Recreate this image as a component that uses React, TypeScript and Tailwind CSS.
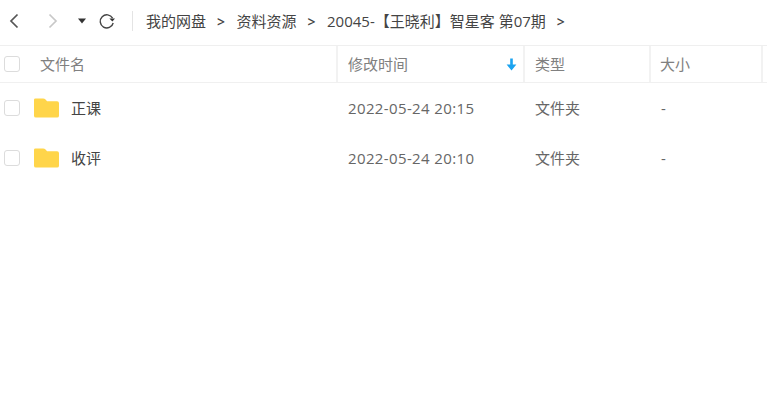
const FONT = { fontFamily: '"Open Sans", "Noto Sans CJK SC", sans-serif' }

const ROWS = [
  { name: "正课", time: "2022-05-24 20:15" },
  { name: "收评", time: "2022-05-24 20:10" },
]

function Checkbox() {
  return <div className="w-4 h-4 ml-1 rounded-[3px] border border-[#dcdcdc] bg-white shrink-0" />
}

function Folder() {
  return (
    <svg viewBox="0 0 26 20" className="w-[25px] h-5 shrink-0 ml-[14px]">
      <path d="M1.5 0H9.5Q11 0 12 1.2L13.6 3H24Q26 3 26 5V18Q26 20 24 20H2Q0 20 0 18V1.5Q0 0 1.5 0Z" fill="#ffd54a" />
    </svg>
  )
}

function Sep() {
  return <span className="ml-[10px] mr-[10.5px] w-[10px] text-center text-[14px] font-semibold text-[#444]">&gt;</span>
}

export default function App() {
  return (
    <div className="w-[767px] h-[414px] bg-white overflow-hidden" style={FONT}>
      {/* toolbar */}
      <div className="h-[46px] pb-[3px] flex items-center border-b border-[#efefef]">
        <svg viewBox="0 0 12 16" className="w-3 h-4 ml-2 shrink-0" fill="none" stroke="#555" strokeWidth="1.7">
          <path d="M9.5 1.5L3 8l6.5 6.5" />
        </svg>
        <svg viewBox="0 0 12 16" className="w-3 h-4 ml-[27px] shrink-0" fill="none" stroke="#c8c8c8" strokeWidth="1.7">
          <path d="M2.5 1.5L9 8l-6.5 6.5" />
        </svg>
        <svg viewBox="0 0 8 6" className="w-2 h-[6px] ml-[19px] shrink-0" fill="#333">
          <path d="M0 0.5H8L4 5.5Z" />
        </svg>
        <svg viewBox="0 0 18 18" className="w-[18px] h-[18px] ml-[12px] shrink-0" fill="none">
          <path d="M14.6 6.2A6.6 6.6 0 1 0 15.2 11" stroke="#444" strokeWidth="1.4" />
          <path d="M11.4 6.4H17L14.4 9.6Z" fill="#333" />
        </svg>
        <div className="w-px h-5 bg-[#e4e4e4] ml-[16px] mr-[13px] shrink-0" />
        <div className="flex items-center text-[15px] text-[#444] whitespace-nowrap">
          <span>我的网盘</span>
          <Sep />
          <span>资料资源</span>
          <Sep />
          <span>20045-【王晓利】智星客 第07期</span>
          <Sep />
        </div>
      </div>

      {/* column header */}
      <div className="h-[37px] flex items-center border-b border-[#f0f0f0] text-[15px] text-[#808080]">
        <div className="w-[338px] h-full flex items-center border-r-2 border-[#f2f2f2]">
          <Checkbox />
          <span className="ml-[20px]">文件名</span>
        </div>
        <div className="w-[187px] h-full flex items-center justify-between pl-[10px] pr-[6px] border-r-2 border-[#f2f2f2]">
          <span>修改时间</span>
          <svg viewBox="0 0 10 12" className="w-[11px] h-[13px]" fill="#1aa3f0">
            <path d="M3.8 0.5H6.2V6H9.5L5 11.5 0.5 6H3.8Z" />
          </svg>
        </div>
        <div className="w-[126px] h-full flex items-center pl-[10px] border-r-2 border-[#f2f2f2]">类型</div>
        <div className="w-[112px] h-full flex items-center pl-[9px] border-r-2 border-[#f2f2f2]">大小</div>
      </div>

      {/* rows */}
      {ROWS.map(r => (
        <div key={r.name} className="h-[50px] flex items-center text-[15px] text-[#666]">
          <div className="w-[338px] flex items-center">
            <Checkbox />
            <Folder />
            <span className="ml-[12px] text-[#444]">{r.name}</span>
          </div>
          <div className="w-[187px] pl-[10px] tracking-[0.375px]">{r.time}</div>
          <div className="w-[125px] pl-[10px]">文件夹</div>
          <div className="pl-[11px]">-</div>
        </div>
      ))}
    </div>
  )
}
